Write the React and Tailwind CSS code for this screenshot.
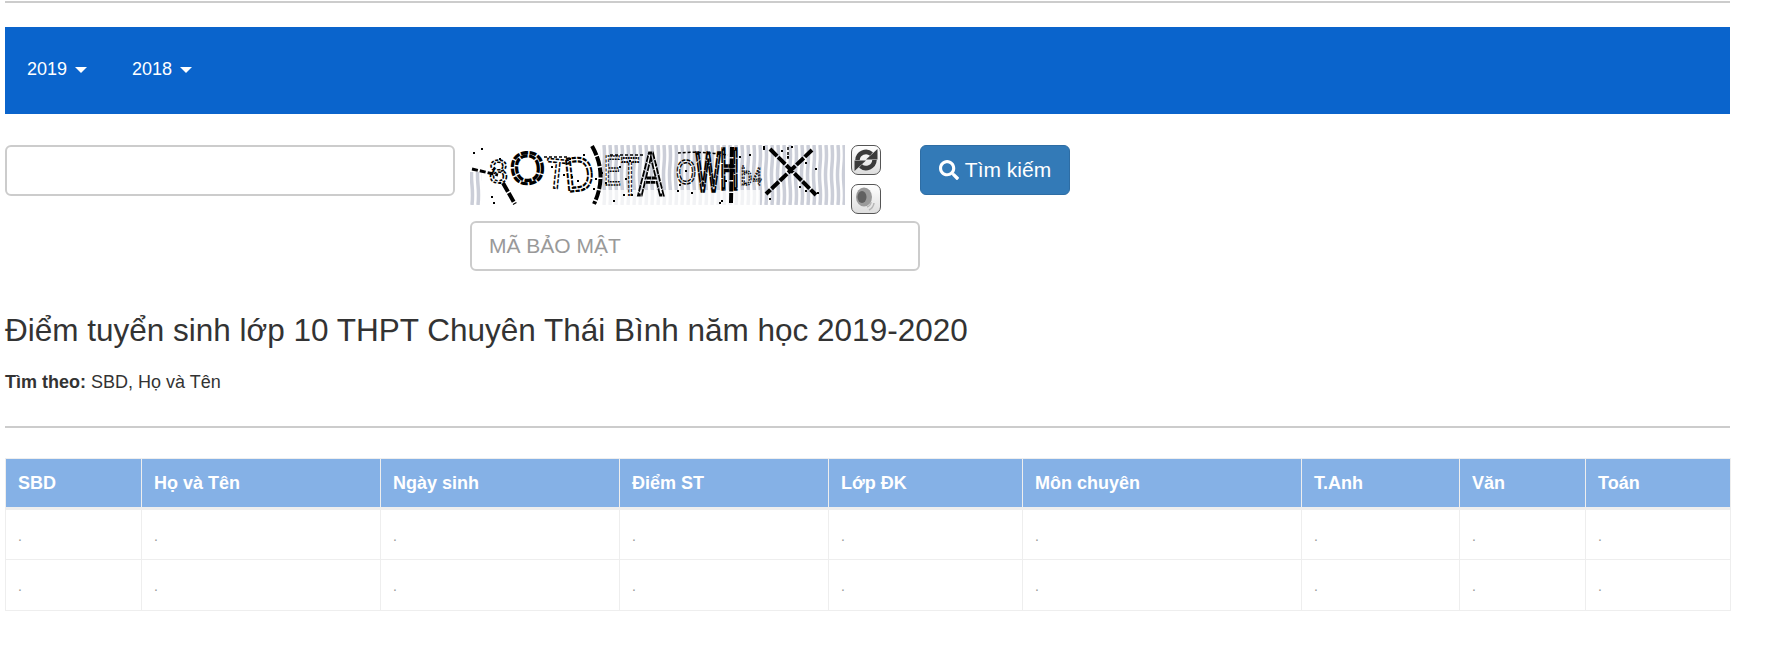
import { FaSearch } from 'react-icons/fa';

const columns = [
  { label: 'SBD', width: 'w-[136px]' },
  { label: 'Họ và Tên', width: 'w-[239px]' },
  { label: 'Ngày sinh', width: 'w-[239px]' },
  { label: 'Điểm ST', width: 'w-[209px]' },
  { label: 'Lớp ĐK', width: 'w-[194px]' },
  { label: 'Môn chuyên', width: 'w-[279px]' },
  { label: 'T.Anh', width: 'w-[158px]' },
  { label: 'Văn', width: 'w-[126px]' },
  { label: 'Toán', width: 'w-[145px]' },
];

const rows = [0, 1];

// captcha letters: char, x, baseline y, size, x-scale, rotation, stroke width, dash
const glyphs = [
  ['8', 19, 38, 34, 1, 0, 1.6, '3 1.5'],
  ['O', 42, 40, 44, 1, -6, 3.2, '7 1.5'],
  ['T', 74, 42, 42, 0.9, 6, 1.6, '4 1.5'],
  ['D', 96, 47, 48, 0.85, -6, 2.2, '5 1.5'],
  ['E', 134, 40, 42, 0.6, 0, 1.5, '3 1.5'],
  ['T', 151, 50, 54, 0.55, 0, 2, '3 1.5'],
  ['A', 168, 50, 62, 0.62, 0, 2.8, '7 1'],
  ['O', 206, 39, 36, 0.72, 0, 1.5, '5 1.5'],
  ['W', 226, 46, 56, 0.46, 0, 3.5, '10 1'],
  ['H', 250, 44, 58, 0.45, 0, 3.5, '14 1'],
  ['b', 271, 40, 26, 0.75, 0, 1.5, '2 1.2'],
  ['4', 283, 40, 24, 0.65, 0, 1.5, '2 1.2'],
];

// scattered specks, fixed so the picture doesn't change between runs
const specks = Array.from({ length: 46 }, (_, i) => [(i * i * 53 + i * 89 + 11) % 372, (i * i * 29 + i * 17 + 3) % 58]);

function Caret() {
  return <span className="ml-2 inline-block align-middle w-0 h-0 border-x-[6px] border-x-transparent border-t-[6px] border-t-white" />;
}

function Captcha() {
  const bands = [];
  for (let x = 0; x < 375; x += 6) {
    bands.push(<path key={x} d={`M${x + 2} 0q1 10 0 20t0 20t0 20`} fill="none" stroke="#cbced8" strokeWidth="3.5" />);
  }
  return (
    <svg className="block w-[375px] h-[60px]" viewBox="0 0 375 60">
      <rect width="375" height="60" fill="#fff" />
      {bands}
      <rect width="130" height="27" fill="#fff" />
      <rect x="12" y="27" width="118" height="33" fill="#fff" />
      <rect x="130" y="45" width="160" height="15" fill="#fff" opacity="0.75" />
      <path d="M2 24l26 6" stroke="#000" strokeWidth="3" strokeDasharray="6 2" fill="none" />
      <path d="M33 38l12 21M122 1q16 28 2 58M262 2l-1 56M300 4l46 46M342 5l-46 44" stroke="#000" fill="none" strokeWidth="4" strokeDasharray="10 1.5" />
      <path d="M74 12h24M140 10h34M208 8q22-2 50 2M318 2v12" stroke="#000" strokeWidth="1.5" strokeDasharray="3 2" fill="none" />
      {glyphs.map(([ch, x, y, size, sx, rot, sw, dash], i) => (
        <text
          key={i}
          transform={`translate(${x} ${y}) rotate(${rot}) scale(${sx} 1)`}
          fontFamily="Liberation Sans, sans-serif"
          fontSize={size}
          fill="none"
          stroke="#000"
          strokeWidth={sw}
          strokeDasharray={dash}
        >
          {ch}
        </text>
      ))}
      {specks.map(([x, y], i) => (
        <rect key={i} x={x} y={y} width="2" height="2" fill="#000" />
      ))}
    </svg>
  );
}

function IconButton({ children }) {
  return (
    <button className="w-[30px] h-[30px] flex items-center justify-center rounded-[7px] border-[1.5px] border-[#555] bg-gradient-to-b from-white to-[#dedede]">
      {children}
    </button>
  );
}

function App() {
  return (
    <div className="min-h-screen bg-white pl-[5px] pr-[35px] text-[#333] text-[18px] font-['Liberation_Sans',Arial,sans-serif]">
      <hr className="border-0 h-[2px] bg-[#ccc] mt-px" />

      <nav className="mt-6 h-[87px] bg-[#0a64cc] flex items-center pl-[22px] pb-[3px] gap-[45px] text-white">
        <span>2019<Caret /></span>
        <span>2018<Caret /></span>
      </nav>

      <div className="mt-[31px] flex items-start">
        <input className="w-[450px] h-[51px] border-2 border-[#ccc] rounded-[6px]" />
        <div className="ml-[15px] w-[450px]">
          <div className="flex items-start">
            <Captcha />
            <div className="ml-[6px] flex flex-col gap-[9px]">
              <IconButton>
                <svg className="w-[24px] h-[24px]" viewBox="0 0 24 24" fill="none" stroke="#3a3a3a" strokeWidth="4.5">
                  <path d="M3.5 12a8.5 8.5 0 0 1 14-6" />
                  <path d="M20.5 12a8.5 8.5 0 0 1-14 6" />
                  <path d="M12 11.5h11.5V1z" fill="#3a3a3a" stroke="none" />
                  <path d="M12 12.5H.5V23z" fill="#3a3a3a" stroke="none" />
                </svg>
              </IconButton>
              <IconButton>
                <svg className="w-[26px] h-[26px]" viewBox="0 0 26 26" fill="none">
                  <ellipse cx="11" cy="11" rx="8" ry="9.5" fill="#9a9a9a" />
                  <ellipse cx="9" cy="11" rx="4.5" ry="6" fill="#606060" />
                  <path d="M18 16a6 6 0 0 1-4 5M21 17a9 9 0 0 1-5 7" stroke="#b5b5b5" strokeWidth="1.5" />
                </svg>
              </IconButton>
            </div>
          </div>
          <input placeholder="MÃ BẢO MẬT" className="block mt-[7px] w-[450px] h-[50px] px-[17px] border-2 border-[#ccc] rounded-[6px] text-[21px] bg-white placeholder:text-[#999]" />
        </div>
        <button className="w-[150px] h-[50px] flex items-center justify-center gap-[6px] rounded-[6px] border border-[#2e6da4] bg-[#337ab7] text-white text-[21px]">
          <FaSearch className="w-[20px] h-[20px]" />
          Tìm kiếm
        </button>
      </div>

      <h3 className="mt-[42px] text-[31.5px] leading-[35px] font-normal">Điểm tuyển sinh lớp 10 THPT Chuyên Thái Bình năm học 2019-2020</h3>
      <p className="mt-[22px] leading-[24px]"><b>Tìm theo:</b> SBD, Họ và Tên</p>

      <hr className="mt-[32px] border-0 h-[2px] bg-[#ccc]" />

      <table className="mt-[30px] w-[1725px] table-fixed border-collapse border border-[#eee]">
        <thead>
          <tr>
            {columns.map((c) => (
              <th key={c.label} className={`${c.width} h-[50px] px-3 text-left text-[18px] font-bold text-white bg-[#85b1e6] border border-[#eee] border-b-[3px]`}>{c.label}</th>
            ))}
          </tr>
        </thead>
        <tbody>
          {rows.map((r) => (
            <tr key={r}>
              {columns.map((c) => (
                <td key={c.label} className="h-[51px] px-3 pt-[3px] text-[#999] text-[14px] border border-[#eee]">.</td>
              ))}
            </tr>
          ))}
        </tbody>
      </table>
    </div>
  );
}

export default App;
